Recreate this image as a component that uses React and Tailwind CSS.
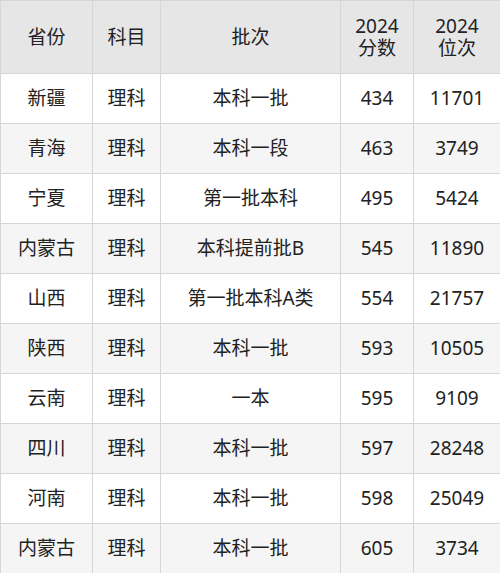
const rows = [
  ['新疆', '理科', '本科一批', '434', '11701'],
  ['青海', '理科', '本科一段', '463', '3749'],
  ['宁夏', '理科', '第一批本科', '495', '5424'],
  ['内蒙古', '理科', '本科提前批B', '545', '11890'],
  ['山西', '理科', '第一批本科A类', '554', '21757'],
  ['陕西', '理科', '本科一批', '593', '10505'],
  ['云南', '理科', '一本', '595', '9109'],
  ['四川', '理科', '本科一批', '597', '28248'],
  ['河南', '理科', '本科一批', '598', '25049'],
  ['内蒙古', '理科', '本科一批', '605', '3734'],
]

function TwoLine({ top, bottom }) {
  return (
    <div className="flex flex-col items-center">
      <div className="leading-[22px]">{top}</div>
      <div className="leading-[22px]">{bottom}</div>
    </div>
  )
}

export default function App() {
  return (
    <div className="w-[500px] h-[573px] bg-white" style={{ fontFamily: '"Noto Sans", "Noto Sans CJK SC", sans-serif' }}>
      <table className="w-[500px] table-fixed border-collapse text-[19px] text-[#222]">
        <colgroup>
          <col className="w-[92px]" />
          <col className="w-[68px]" />
          <col className="w-[180px]" />
          <col className="w-[73px]" />
          <col className="w-[87px]" />
        </colgroup>
        <thead>
          <tr className="h-[73px] bg-[#e6e6e6]">
            <th className="border border-[#d6d6d6] font-normal">省份</th>
            <th className="border border-[#d6d6d6] font-normal">科目</th>
            <th className="border border-[#d6d6d6] font-normal">批次</th>
            <th className="border border-[#d6d6d6] font-normal"><TwoLine top="2024" bottom="分数" /></th>
            <th className="border border-[#d6d6d6] font-normal"><TwoLine top="2024" bottom="位次" /></th>
          </tr>
        </thead>
        <tbody>
          {rows.map((r, i) => (
            <tr key={i} className={`h-[50px] ${i % 2 === 1 ? 'bg-[#f5f5f5]' : 'bg-white'}`}>
              {r.map((c, j) => (
                <td key={j} className="border border-[#d6d6d6] text-center p-0">{c}</td>
              ))}
            </tr>
          ))}
        </tbody>
      </table>
    </div>
  )
}
